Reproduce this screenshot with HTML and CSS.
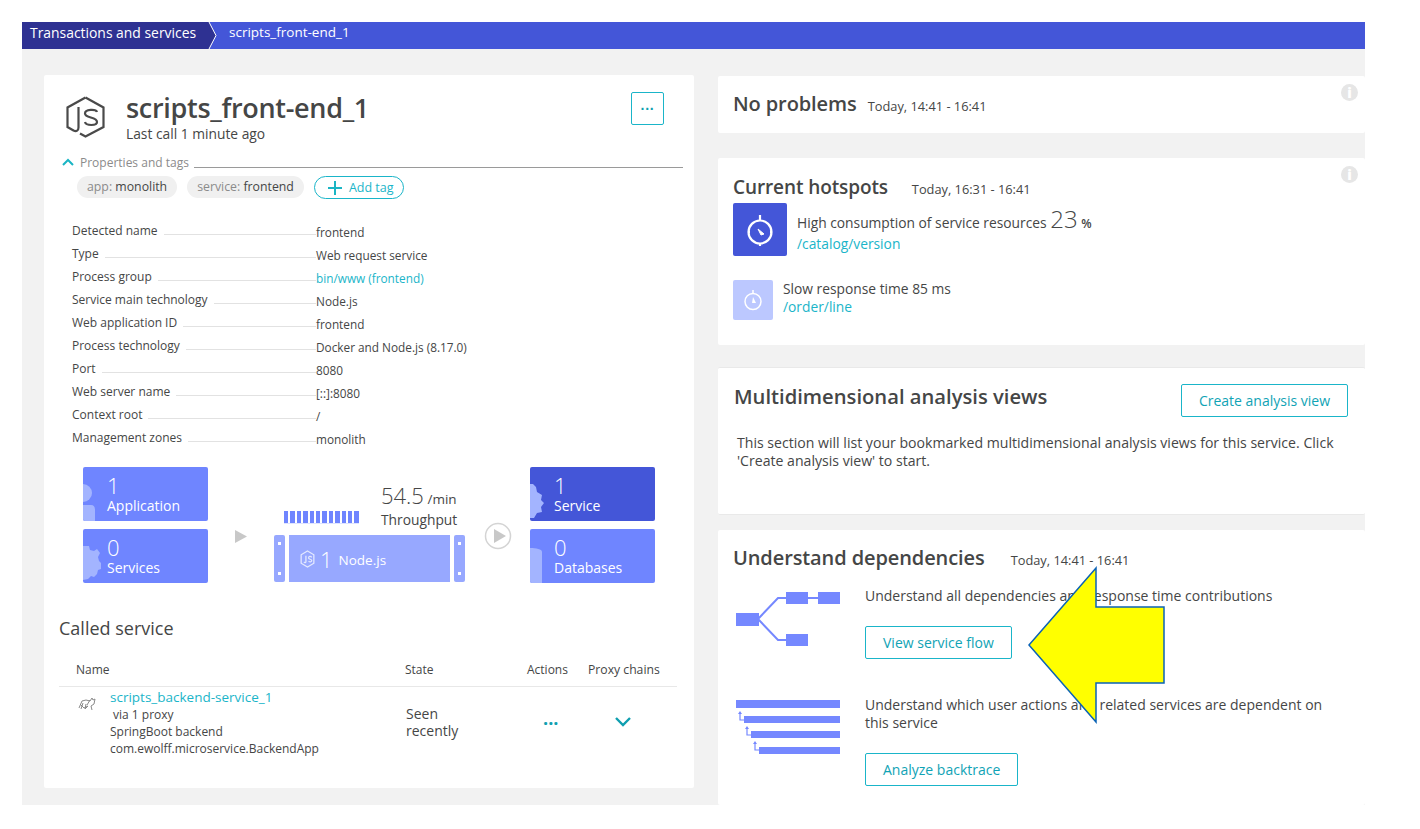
FILE: index.html
```html
<!DOCTYPE html>
<html lang="en">
<head>
    <meta charset="UTF-8">
    <meta name="viewport" content="width=device-width, initial-scale=1.0">
    <title>scripts_front-end_1</title>
    <link rel="stylesheet" href="styles.css">
</head>
<body>
    <nav class="breadcrumb">
        <a class="crumb-parent">Transactions and services</a>
        <svg class="crumb-sep" width="12" height="27" viewBox="0 0 12 27"><path d="M0 0h2l7 13.500-7 13.500h-2z" fill="#2e3192"/><path d="M2 0l7 13.500-7 13.500" fill="none" stroke="#fff" stroke-width="1"/></svg>
        <span class="crumb-current">scripts_front-end_1</span>
    </nav>

    <main class="page">
        <section class="card service-card">
            <header class="service-head">
                <svg class="js-icon" width="39" height="42" viewBox="0 0 39 42" fill="none" stroke="#4a4a4a" stroke-width="2.200">
                    <path d="M19.500 1.500L37.500 11.500V31L19.500 40.500L14 37.500"/>
                    <path d="M19.500 1.500L1.500 11.500V31l6 3.500c3 1.500 5 0 5-3V11"/>
                    <path d="M31 16c-1-3-12-3-12 1.500 0 5 12 3 12 8.500 0 4-11 4-12 0"/>
                </svg>
                <div class="service-title">
                    <h1>scripts_front-end_1</h1>
                    <p>Last call 1 minute ago</p>
                </div>
                <button class="more-btn">&middot;&middot;&middot;</button>
            </header>

            <div class="section-rule">
                <svg width="12" height="8" viewBox="0 0 12 8" fill="none" stroke="#1ab5c4" stroke-width="2"><path d="M1 7l5-5 5 5"/></svg>
                <span>Properties and tags</span>
                <i></i>
            </div>

            <div class="tags">
                <span class="tag">app: <b>monolith</b></span>
                <span class="tag">service: <b>frontend</b></span>
                <span class="add-tag"><svg width="14" height="14" viewBox="0 0 14 14" stroke="#1ab5c4" stroke-width="2"><path d="M7 0v14M0 7h14"/></svg>Add tag</span>
            </div>

            <dl class="props">
                <div><dt>Detected name</dt><dd>frontend</dd></div>
                <div><dt>Type</dt><dd>Web request service</dd></div>
                <div><dt>Process group</dt><dd class="link">bin/www (frontend)</dd></div>
                <div><dt>Service main technology</dt><dd>Node.js</dd></div>
                <div><dt>Web application ID</dt><dd>frontend</dd></div>
                <div><dt>Process technology</dt><dd>Docker and Node.js (8.17.0)</dd></div>
                <div><dt>Port</dt><dd>8080</dd></div>
                <div><dt>Web server name</dt><dd>[::]:8080</dd></div>
                <div><dt>Context root</dt><dd>/</dd></div>
                <div><dt>Management zones</dt><dd>monolith</dd></div>
            </dl>

            <div class="topology">
                <div class="tile-col">
                    <div class="tile">
                        <svg class="tile-art" width="14" height="54" viewBox="0 0 14 54" fill="#a3b4ff"><circle cx="0" cy="26" r="9"/><path d="M0 38h8q4 0 4 5v11h-12z"/></svg>
                        <strong>1</strong><span>Application</span>
                    </div>
                    <div class="tile">
                        <svg class="tile-art" width="18" height="54" viewBox="0 0 18 54" fill="#a3b4ff"><path d="M0 17h6l1 4 4 1 3-2 3 4-2 4 1 4 2 2v6l-3 1-1 4-3 3-3-1-3 3-5 1z"/></svg>
                        <strong>0</strong><span>Services</span>
                    </div>
                </div>

                <svg class="flow-arrow" width="12" height="13" viewBox="0 0 12 13"><path d="M0 0l12 6.500-12 6.500z" fill="#c8c8c8"/></svg>

                <div class="process">
                    <div class="rate">
                        <div class="bars">
                            <i></i><i></i><i></i><i></i><i></i><i></i><i></i><i></i><i></i><i></i><i></i><i></i>
                        </div>
                        <div class="rate-text">
                            <div class="rate-value"><strong>54.5</strong> /min</div>
                            <div class="rate-label">Throughput</div>
                        </div>
                    </div>
                    <div class="host">
                        <div class="host-side"><i></i><i></i></div>
                        <div class="host-main">
                            <svg width="15" height="18" viewBox="0 0 14 17" fill="none" stroke="#e4e9ff" stroke-width="1.200"><path d="M7 1l6 3.500v8l-6 3.500-6-3.500v-8z"/><path d="M5.500 5.500v5.500c0 1-1 1-2 .5M11 7c-1-1.500-3-1-3 .5s3 1 3 2.500-2 1.500-3 .5"/></svg>
                            <strong>1</strong><span>Node.js</span>
                        </div>
                        <div class="host-side"><i></i><i></i></div>
                    </div>
                </div>

                <svg class="play" width="28" height="28" viewBox="0 0 28 28"><circle cx="14" cy="14" r="12.500" fill="#fff" stroke="#d4d4d4" stroke-width="1.500"/><path d="M10 7l12 7-12 7z" fill="#c8c8c8"/></svg>

                <div class="tile-col">
                    <div class="tile tile-dark">
                        <svg class="tile-art" width="14" height="54" viewBox="0 0 14 54" fill="#a3b4ff"><path d="M0 17h3l3 3 1 5 5 3-1 5 3 3-3 4 1 5-5 1-3 5h-4z"/></svg>
                        <strong>1</strong><span>Service</span>
                    </div>
                    <div class="tile">
                        <svg class="tile-art" width="14" height="54" viewBox="0 0 14 54" fill="#a3b4ff"><path d="M0 19c6 0 12 1 12 4v31h-12z"/></svg>
                        <strong>0</strong><span>Databases</span>
                    </div>
                </div>
            </div>

            <h2 class="called-title">Called service</h2>
            <table class="called">
                <thead>
                    <tr><th class="col-name">Name</th><th class="col-state">State</th><th class="col-actions">Actions</th><th class="col-proxy">Proxy chains</th></tr>
                </thead>
                <tbody>
                    <tr>
                        <td>
                            <div class="called-row">
                                <svg width="18" height="16" viewBox="0 0 18 16" fill="none" stroke="#8a8a8a" stroke-width="1"><path d="M1 13l3-7 4-1 4 1 2-3 1 2 2-1-1 5-3 2 1 4M5 8l-2 6M8 9l-1 5 3-3M12 5l-3 5M2 9l4 4 4-2"/></svg>
                                <div>
                                    <a class="link called-link">scripts_backend-service_1</a>
                                    <div class="via">via 1 proxy</div>
                                    <div>SpringBoot backend</div>
                                    <div>com.ewolff.microservice.BackendApp</div>
                                </div>
                            </div>
                        </td>
                        <td class="state">Seen<br>recently</td>
                        <td class="dots">&middot;&middot;&middot;</td>
                        <td class="chev"><svg width="16" height="10" viewBox="0 0 16 10" fill="none" stroke="#0f9fb0" stroke-width="2.400"><path d="M1 1l7 7 7-7"/></svg></td>
                    </tr>
                </tbody>
            </table>
        </section>

        <div class="right-col">
            <section class="card panel panel-problems">
                <h2>No problems <small>Today, 14:41 - 16:41</small></h2>
                <span class="info">i</span>
            </section>

            <section class="card panel panel-hotspots">
                <h2>Current hotspots <small>Today, 16:31 - 16:41</small></h2>
                <span class="info">i</span>
                <div class="hotspot hotspot-big">
                    <div class="hot-icon">
                        <svg width="26" height="32" viewBox="0 0 26 32" fill="none" stroke="#fff" stroke-width="2.200"><circle cx="13" cy="18" r="11.500"/><path d="M13 1v5M13 29v3M1 18h2M23 18h2"/><path d="M11 15l6 5-3 1z" fill="#fff" stroke-width="1"/></svg>
                    </div>
                    <div class="hot-text">
                        <p>High consumption of service resources <span class="big-num">23</span> <b>%</b></p>
                        <a class="link">/catalog/version</a>
                    </div>
                </div>
                <div class="hotspot hotspot-small">
                    <div class="hot-icon">
                        <svg width="18" height="22" viewBox="0 0 18 22" fill="none" stroke="#fff" stroke-width="1.500"><circle cx="9" cy="12.500" r="8"/><path d="M9 1v3"/><path d="M9 8l3 6h-4z" fill="#fff" stroke="none"/></svg>
                    </div>
                    <div class="hot-text">
                        <p>Slow response time 85 ms</p>
                        <a class="link">/order/line</a>
                    </div>
                </div>
            </section>

            <section class="card panel panel-analysis">
                <div class="analysis-head">
                    <h2>Multidimensional analysis views</h2>
                    <button class="btn btn-create">Create analysis view</button>
                </div>
                <p>This section will list your bookmarked multidimensional analysis views for this service. Click 'Create analysis view' to start.</p>
            </section>

            <section class="card panel panel-deps">
                <h2>Understand dependencies <small>Today, 14:41 - 16:41</small></h2>
                <div class="dep dep-flow">
                    <svg width="106" height="55" viewBox="0 0 106 55" fill="#7588ff">
                        <rect x="0" y="22" width="23" height="13"/><rect x="50" y="1" width="22" height="12"/><rect x="82" y="1" width="22" height="12"/><rect x="50" y="43" width="22" height="12"/>
                        <path d="M22 28L42 7h10M22 28l20 21h10M70 7h14" fill="none" stroke="#7588ff" stroke-width="2"/>
                    </svg>
                    <div>
                        <p>Understand all dependencies and response time contributions</p>
                        <button class="btn">View service flow</button>
                    </div>
                </div>
                <div class="dep dep-trace">
                    <svg width="106" height="56" viewBox="0 0 106 56" fill="#7588ff">
                        <rect x="0" y="0" width="104" height="8"/><rect x="8" y="16" width="96" height="7"/><rect x="15" y="31" width="89" height="7"/><rect x="23" y="47" width="81" height="7"/>
                        <path d="M4 14v6h4M11 29v6h4M19 44v6h4" fill="none" stroke="#7588ff" stroke-width="1.200"/>
                        <path d="M2 14l2-3 2 3zM9 29l2-3 2 3zM17 44l2-3 2 3z"/>
                    </svg>
                    <div>
                        <p>Understand which user actions and related services are dependent on this service</p>
                        <button class="btn">Analyze backtrace</button>
                    </div>
                </div>
            </section>
        </div>
    </main>

    <svg class="callout" width="140" height="158" viewBox="0 0 140 158"><path d="M2 79L69 2v39h68v76H69v39z" fill="#ffff00" stroke="#0b63b5" stroke-width="1.500"/></svg>
</body>
</html>
```

FILE: styles.css
```css
* {
    box-sizing: border-box;
}

body {
    font-family: "Open Sans", Arial, sans-serif;
    font-size: 12.500px;
    color: #454646;
    background-color: #fff;
    margin: 0;
    padding: 22px 55px 0 22px;
    height: 829px;
    overflow: hidden;
    position: relative;
}

h1, h2, p, dl, dd {
    margin: 0;
}

.link {
    color: #1ab5c9;
}

/* breadcrumb */
.breadcrumb {
    display: flex;
    align-items: center;
    height: 27px;
    background-color: #4456d8;
    color: #fff;
    font-size: 13.900px;
}

.crumb-parent {
    background-color: #2e3192;
    height: 27px;
    line-height: 21px;
    padding-left: 8px;
    width: 185px;
}

.crumb-current {
    margin-left: 10px;
    line-height: 21px;
    align-self: flex-start;
    height: 27px;
    font-size: 13.500px;
}

/* page */
.page {
    display: grid;
    grid-template-columns: 650px 647px;
    column-gap: 24px;
    background-color: #f2f2f2;
    height: 756px;
    padding: 26px 0 0 22px;
}

.card {
    background-color: #fff;
    border-radius: 2px;
    position: relative;
}

.service-card {
    height: 713px;
    padding: 18px 11px 0 15px;
}

.service-head {
    display: flex;
    align-items: flex-start;
    padding-left: 7px;
    height: 59px;
}

.js-icon {
    margin-top: 3px;
}

.service-title {
    margin-left: 21px;
    flex: 1;
    margin-top: -2px;
}

.service-title h1 {
    font-size: 27px;
    font-weight: 600;
    line-height: 33px;
    letter-spacing: -0.3px;
    color: #454646;
}

.service-title p {
    font-size: 13.800px;
    line-height: 20px;
}

.more-btn {
    width: 33px;
    height: 33px;
    margin: -1px 19px 0 0;
    padding: 0;
    background: #fff;
    border: 1px solid #1ab5c9;
    border-radius: 2px;
    color: #0f9fb0;
    font-size: 14px;
    font-weight: 700;
}

.section-rule {
    display: flex;
    align-items: center;
    height: 20px;
    margin-left: 3px;
    color: #8b8b8b;
    font-size: 12px;
}

.section-rule span {
    margin-left: 6px;
}

.section-rule i {
    flex: 1;
    margin: 11px 0 0 5px;
    border-top: 1px solid #9a9a9a;
}

.tags {
    display: flex;
    gap: 10px;
    margin: 4px 0 0 18px;
}

.tag {
    height: 22px;
    line-height: 22px;
    padding: 0 10px;
    border-radius: 11px;
    background-color: #f0f0f0;
    color: #8b8b8b;
    font-size: 12.300px;
}

.tag b {
    font-weight: 400;
    color: #454646;
}

.add-tag {
    display: flex;
    align-items: center;
    gap: 7px;
    height: 23px;
    padding: 0 9px 0 13px;
    border: 1px solid #1ab5c9;
    border-radius: 12px;
    color: #1ab5c9;
    font-size: 12.500px;
}

.props {
    margin: 21px 0 0 13px;
}

.props div {
    display: flex;
    height: 23px;
    line-height: 21px;
    font-size: 11.800px;
}

.props dt {
    width: 244px;
    display: flex;
    font-size: 12px;
}

.props dt::after {
    content: "";
    flex: 1;
    height: 14px;
    margin: 0 0 0 6px;
    border-bottom: 1px solid #e2e2e2;
}

.props dd {
    padding-top: 2px;
}

/* topology */
.topology {
    display: grid;
    grid-template-columns: 125px 66px 191px 65px 125px;
    align-items: center;
    justify-items: center;
    margin: 17px 0 0 24px;
}

.tile-col {
    display: flex;
    flex-direction: column;
    gap: 8px;
    width: 125px;
}

.tile {
    position: relative;
    height: 54px;
    border-radius: 2px;
    background-color: #6f85ff;
    color: #fff;
    padding: 6px 0 0 24px;
    overflow: hidden;
}

.tile-dark {
    background-color: #4456d8;
}

.tile-art {
    position: absolute;
    left: 0;
    top: 0;
}

.tile strong {
    display: block;
    font-size: 22px;
    font-weight: 300;
    line-height: 24px;
}

.tile span {
    display: block;
    font-size: 14px;
    line-height: 18px;
}

.flow-arrow {
    margin-top: 22px;
}

.play {
    margin-top: 22px;
}

.process {
    width: 191px;
    align-self: start;
}

.rate {
    display: flex;
    align-items: flex-end;
    justify-content: space-between;
    height: 68px;
    padding: 0 0 5px 10px;
}

.bars {
    display: flex;
    gap: 2px;
    margin-bottom: 6px;
    border-bottom: 1px solid #dfe4ff;
}

.bars i {
    width: 4.400px;
    height: 12px;
    background-color: #6f85ff;
}

.rate-text {
    width: 84px;
}

.rate-value {
    font-size: 13.500px;
    line-height: 19px;
}

.rate-value strong {
    font-size: 22px;
    font-weight: 300;
}

.rate-label {
    font-size: 13.800px;
    line-height: 21px;
}

.host {
    display: flex;
    gap: 4px;
    height: 47px;
}

.host-side {
    width: 11px;
    background-color: #97a8ff;
    border-radius: 2px;
    display: flex;
    flex-direction: column;
    justify-content: space-between;
    align-items: center;
    padding: 7px 0;
}

.host-side i {
    width: 3px;
    height: 3px;
    background-color: #fff;
}

.host-main {
    flex: 1;
    background-color: #97a8ff;
    color: #fff;
    display: flex;
    align-items: center;
    padding-left: 11px;
}

.host-main strong {
    font-size: 22px;
    font-weight: 300;
    margin-left: 5px;
}

.host-main span {
    font-size: 13.500px;
    margin: 3px 0 0 6px;
}

/* called service */
.called-title {
    font-size: 18px;
    font-weight: 400;
    line-height: 24px;
    margin-top: 33px;
}

.called {
    width: 618px;
    margin-top: 20px;
    border-collapse: collapse;
    table-layout: fixed;
}

.called th {
    font-size: 12px;
    font-weight: 400;
    text-align: left;
    height: 26px;
    padding: 0 0 6px;
    border-bottom: 1px solid #e8e8e8;
}

.col-name {
    width: 346px;
    padding-left: 17px !important;
}

.col-state {
    width: 122px;
}

.col-actions {
    width: 61px;
}

.called .col-proxy {
    font-size: 12.200px;
}

.called td {
    vertical-align: middle;
    padding: 0;
    font-size: 12px;
    line-height: 17px;
}

.called-row {
    display: flex;
    gap: 14px;
    padding: 2px 0 0 19px;
    height: 76px;
}

.called-row svg {
    margin-top: 6px;
    flex: none;
}

.called-link {
    font-size: 13.500px;
}

.via {
    padding-left: 3px;
}

.called .state {
    font-size: 14px;
    padding: 0 0 5px 1px;
    line-height: 17px;
}

.called .dots {
    color: #0f9fb0;
    font-size: 18px;
    font-weight: 700;
    padding: 0 0 2px 16px;
}

.chev {
    padding: 0 0 4px 27px !important;
}

/* right column */
.right-col {
    display: flex;
    flex-direction: column;
    padding-top: 1px;
}

.panel {
    padding: 0 16px 0 15px;
}

.panel h2 {
    font-size: 20px;
    font-weight: 600;
    line-height: 26px;
    letter-spacing: -0.1px;
}

.panel small {
    font-size: 12.800px;
    font-weight: 400;
    letter-spacing: 0;
    margin-left: 6px;
}

.info {
    position: absolute;
    top: 8px;
    right: 7px;
    width: 17px;
    height: 17px;
    border-radius: 50%;
    background-color: #e6e6e6;
    color: #fff;
    font-size: 14px;
    font-weight: 800;
    line-height: 17px;
    text-align: center;
}

.panel-problems {
    height: 57px;
    padding-top: 15px;
}

.panel-hotspots {
    height: 187px;
    margin-top: 25px;
    padding-top: 16px;
}

.panel-hotspots h2 {
    font-size: 19px;
}

.panel-hotspots small {
    margin-left: 19px;
}

.hotspot {
    display: flex;
}

.hot-icon {
    display: flex;
    align-items: center;
    justify-content: center;
    border-radius: 2px;
    flex: none;
}

.hot-text {
    font-size: 13.800px;
}

.hotspot-big {
    margin-top: 1px;
    gap: 10px;
}

.hotspot-big .hot-icon {
    width: 54px;
    height: 53px;
    background-color: #4456d8;
}

.hotspot-big p {
    line-height: 21px;
    margin-top: 6px;
}

.hotspot-big .link {
    line-height: 17px;
}

.big-num {
    font-size: 24px;
    font-weight: 300;
    line-height: 20px;
}

.hotspot-big b {
    font-weight: 600;
    font-size: 12px;
}

.hotspot-small {
    margin-top: 24px;
    gap: 10px;
}

.hotspot-small .hot-icon {
    width: 40px;
    height: 40px;
    background-color: #bcc8ff;
}

.hotspot-small .hot-text {
    line-height: 18px;
}

.panel-analysis {
    height: 148px;
    margin-top: 22px;
    border-top: 1px solid #e9e9e9;
    border-bottom: 1px solid #e9e9e9;
}

.analysis-head {
    display: flex;
    justify-content: space-between;
    align-items: flex-start;
    padding-top: 15px;
}

.analysis-head h2 {
    letter-spacing: 0;
    font-size: 20.200px;
    margin-left: 1px;
}

.btn {
    height: 33px;
    padding: 0 17px;
    background: #fff;
    border: 1px solid #1ab5c9;
    border-radius: 2px;
    color: #10a3b5;
    font-family: inherit;
    font-size: 14px;
}

.btn-create {
    margin: 1px 1px 0 0;
}

.panel-analysis p {
    margin: 17px 14px 0 4px;
    font-size: 14.100px;
    line-height: 18px;
}

.panel-deps {
    height: 275px;
    margin-top: 15px;
    padding-top: 15px;
}

.panel-deps small {
    margin-left: 21px;
}

.dep {
    display: flex;
    gap: 23px;
}

.dep svg {
    flex: none;
    margin-left: 3px;
}

.dep p {
    font-size: 14px;
    line-height: 18px;
    max-width: 470px;
}

.dep .btn {
    margin-top: 21px;
}

.dep-flow {
    margin-top: 14px;
}

.dep-flow svg {
    margin-top: 4px;
}

.dep-trace {
    margin-top: 37px;
}

.dep-trace svg {
    margin-top: 4px;
}

/* yellow arrow drawn on top of the screenshot */
.callout {
    position: absolute;
    left: 1027px;
    top: 566px;
}
```
